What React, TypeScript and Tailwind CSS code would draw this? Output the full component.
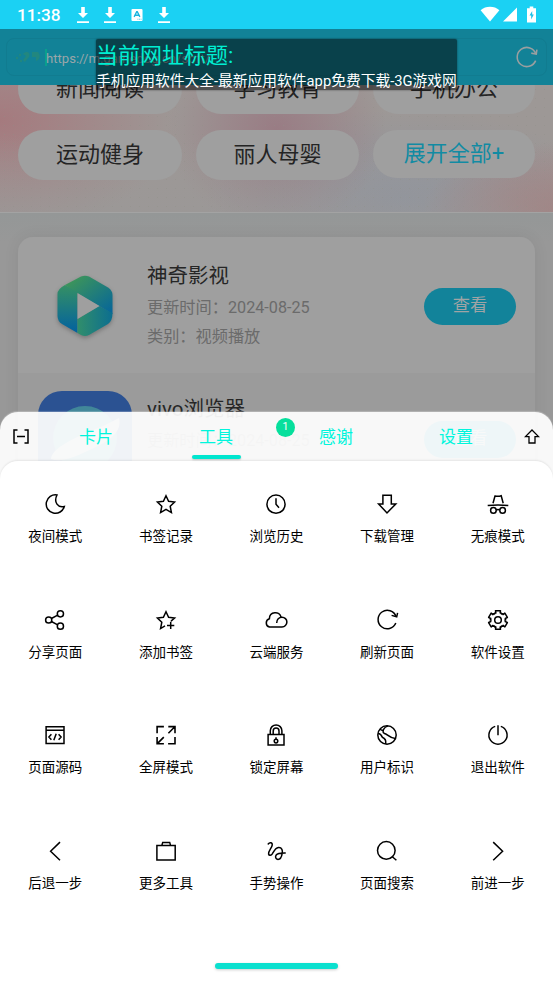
import type { ReactNode } from "react";

function Glyph({ children, size = 24 }: { children: ReactNode; size?: number }) {
  return (
    <svg width={size} height={size} viewBox="0 0 24 24" fill="none" stroke="currentColor" strokeWidth="1.5">
      {children}
    </svg>
  );
}

const gearPoints = Array.from({ length: 6 }, (_, k) => {
  const corners: [number, number][] = [[-30, 6.9], [-22, 7.9], [-17, 7.4], [-15, 9.7], [15, 9.7], [17, 7.4], [22, 7.9]];
  return corners
    .map(([offset, radius]) => {
      const a = ((k * 60 - 90 + offset) * Math.PI) / 180;
      return `${(12 + radius * Math.cos(a)).toFixed(2)},${(12 + radius * Math.sin(a)).toFixed(2)}`;
    })
    .join(" ");
}).join(" ");

const tools: { label: string; icon: ReactNode }[] = [
  { label: "夜间模式", icon: <path d="M14 3A9.2 9.2 0 1 0 21.3 14.5C15.2 16.2 10.3 10.2 14 3Z" /> },
  { label: "书签记录", icon: <path d="M12 3.7 14.6 9.2 20.6 10 16.2 14.2 17.4 20.6 12 17.4 6.6 20.6 7.8 14.2 3.4 10 9.4 9.2Z" /> },
  { label: "浏览历史", icon: <><circle cx="12" cy="12.2" r="9.1" /><path d="M12 6.3V12.3L15 15.7" /></> },
  { label: "下载管理", icon: <path d="M7.9 3.3H16.3V11.9H20.8L12 20.9 3.6 11.9H7.9Z" /> },
  { label: "无痕模式", icon: <><path d="M7 11.2 9 4.1C11 4.1 12 5 15.2 3.7L17.2 11.2M1.7 13.6Q12 12.4 22.3 13.6M10.2 18Q12 17 13.8 18" /><circle cx="7.4" cy="18.4" r="2.8" /><circle cx="16.6" cy="18.4" r="2.8" /></> },
  { label: "分享页面", icon: <><circle cx="5.7" cy="12" r="3.1" /><circle cx="17.4" cy="5.8" r="3.1" /><circle cx="17.4" cy="18.2" r="3.1" /><path d="M8.4 10.5 14.7 7.2M8.4 13.5 14.7 16.8" /></> },
  { label: "添加书签", icon: <path d="M11 17.9 6.6 20.6 7.8 14.2 3.4 10 9.4 9.2 12 3.7 14.6 9.2 20.6 10 17 13.1M16.7 13.8V21M13 17.4H20.3" /> },
  { label: "云端服务", icon: <path d="M17 9.2C16 2.8 5.4 3 5.4 10.7A4.3 4.3 0 0 0 5.5 19H18A4.9 4.9 0 0 0 18 9.2C15 9.2 12.7 11.5 12.7 14.9" /> },
  { label: "刷新页面", icon: <><path d="M20.8 15A9.2 9.2 0 1 1 21 8.6" /><path d="M22.6 4.8 21.7 8.8 16.6 7.4" /></> },
  { label: "软件设置", icon: <><polygon points={gearPoints} strokeLinejoin="round" /><circle cx="12" cy="12" r="3.3" /></> },
  { label: "页面源码", icon: <path d="M3.1 3.7H21V20.5H3.1ZM3.1 7.3H21M8.4 11.2 5.9 14 8.4 16.8M15.6 11.2 18.1 14 15.6 16.8M13.2 10.8 10.8 17.2" /> },
  { label: "全屏模式", icon: <path strokeWidth="1.6" d="M3.1 10.2V3.6H9.9M21 14V20.8H14.1M14.3 3.6H21V10.2M20.8 3.8 14.4 10.2M3.1 14V20.8H9.9M3.3 20.6 9.8 14.1" /> },
  { label: "锁定屏幕", icon: <><path d="M4.1 11.5H20V22.1H4.1ZM6.3 11.5V7.7A5.8 5.8 0 0 1 17.9 7.7V11.5M9.2 11.5V8A2.9 2.9 0 0 1 15 8V11.5M12 14.2V16.5" /><circle cx="12" cy="18.1" r="1.8" /></> },
  { label: "用户标识", icon: <><circle cx="12" cy="12" r="9.2" /><path d="M13 2.9C8.5 4.5 6.5 8.5 9.4 10.5C12.5 10.8 13.2 14.5 20.4 15.5M2.9 10.5C5.6 10.3 6.5 12.4 7.3 14.2C10.7 15.5 11.2 18 10.7 21M5.1 6.2C6.2 7.2 7.1 7.5 8 7.5" /></> },
  { label: "退出软件", icon: <path d="M9.2 3.4A9.1 9.1 0 1 0 14.8 3.4M12 2.3V12.3" /> },
  { label: "后退一步", icon: <path d="M17 3.1 7.6 12.3 17 21.3" /> },
  { label: "更多工具", icon: <path d="M2.9 6.6H21.2V20.9H2.9ZM7.8 6.6 8.7 3.4H15.7L16.6 6.6" /> },
  { label: "手势操作", icon: <path strokeLinecap="round" d="M4.2 5C5.5 3.2 8.7 3.2 8.2 6.2C7.8 9 4.2 12 4.6 15C5 17 7.3 16.5 8.3 14.9C9.6 12.7 11.3 8.8 14.5 8.5C18 8.2 18.8 11.7 18.2 14.3C17.7 17.5 16.5 20.4 14 20.4C11.5 20.2 11 17.6 12.2 16C13.9 13.8 17.5 14 21.2 14" /> },
  { label: "页面搜索", icon: <><circle cx="11.3" cy="11.4" r="8.8" /><path d="M17.3 17.8 21.4 21.3" /></> },
  { label: "前进一步", icon: <path d="M7.2 3.1 16.6 12.3 7.2 21.3" /> },
];

function DownloadMark() {
  return (
    <svg width="14" height="18" viewBox="0 0 14 18" fill="#fff">
      <path d="M5.2 1H8.8V7H12L7 12 2 7H5.2ZM1 15.3H13V17H1Z" />
    </svg>
  );
}

function StatusBar() {
  return (
    <header className="flex h-[29px] shrink-0 items-center bg-[#1bd1f3] pl-[17px] pr-[17px] text-white">
      <span className="w-[59px] pt-[2px] text-[17.2px] font-medium leading-[29px]">11:38</span>
      <div className="flex items-center">
        <DownloadMark />
        <span className="ml-[13px] flex"><DownloadMark /></span>
        <svg className="ml-[14px]" width="12" height="14" viewBox="0 0 13 14">
          <rect x="0.5" y="0.5" width="12" height="13" rx="1.2" fill="#fff" />
          <path d="M3.4 9 6.2 3.4H6.8L9.6 9M4.6 7.2H8.4" stroke="#1bb5df" strokeWidth="1.5" fill="none" />
          <path d="M7 11.6H11.5" stroke="#1bb5df" strokeWidth="0.8" strokeDasharray="1 0.7" />
        </svg>
        <span className="ml-[14px] flex"><DownloadMark /></span>
      </div>
      <div className="ml-auto flex items-center pb-px">
        <svg width="20" height="16" viewBox="0 0 20 16" fill="#fff"><path d="M10 15.5 0.6 4.2C5.8-.4 14.2-.4 19.4 4.2Z" /></svg>
        <svg className="ml-[3px]" width="14" height="15" viewBox="0 0 14 15" fill="#fff"><path d="M14 0.5V14.5H0Z" /></svg>
        <svg className="ml-[10px]" width="9" height="17" viewBox="0 0 9 17">
          <path d="M2.7 0.5H6.3V2.2H9V16.5H0V2.2H2.7Z" fill="#fff" />
          <path d="M5.2 5 2.5 9.6H4.2V13.5L6.8 8.5H5.2Z" fill="#1bc0e8" />
        </svg>
      </div>
    </header>
  );
}

function AddressBar() {
  return (
    <div className="h-[56px] shrink-0 bg-[#128297] px-[6px] pt-[9px]">
      <div className="flex h-[38px] items-center rounded-[8px] border border-[#117c90] pl-[8px] pr-[7px] text-[#9aa6a9]">
        <svg width="26" height="16" viewBox="0 0 26 16" fill="#22877f">
          <circle cx="2" cy="9" r="1.2" /><circle cx="5" cy="6" r="1.2" /><circle cx="6" cy="12" r="1.2" />
          <path d="M8 5C12 1 16 4 14 8L10 13 8 11 11 7ZM17 3H23C26 6 25 11 21 12V8H17Z" />
        </svg>
        <i className="ml-[4px] h-[17px] w-[2px] bg-[#08a08c]" />
        <span className="-ml-px pt-[3px] text-[13.1px] leading-[18px]">https://m.gamedog.cn/soft/</span>
        <span className="ml-auto flex text-[#9a9fa0]">
          <Glyph size={25}>
            <path d="M20.8 15A9.2 9.2 0 1 1 21 8.6" />
            <path d="M22 4.4 21.4 8.8 16.6 7.8" />
          </Glyph>
        </span>
      </div>
    </div>
  );
}

function Chip({ label, accent = false }: { label: string; accent?: boolean }) {
  return (
    <div className={`flex items-center justify-center rounded-full bg-[#9f9f9f] text-[22px] leading-none ${accent ? "h-[48px] text-[#128ba3]" : "h-[50px] pb-px text-[#242424]"}`}>
      {label}
    </div>
  );
}

function Categories() {
  return (
    <section className="h-[128px] shrink-0 overflow-hidden border-b border-[#a3a3a3] bg-[#9d9896] bg-[radial-gradient(circle_at_50%_50%,#8f928866_0.6px,transparent_0.9px),linear-gradient(180deg,transparent_40%,#99989870_100%),radial-gradient(ellipse_180px_110px_at_0%_28%,#a57a7e,transparent),radial-gradient(ellipse_110px_100px_at_50%_35%,#997c84,transparent),radial-gradient(ellipse_130px_70px_at_100%_100%,#a67a7a,transparent),radial-gradient(ellipse_200px_90px_at_73%_90%,#8f949e,transparent)] bg-[length:9px_9px,auto,auto,auto,auto,auto]">
      <div className="-mt-[21px] grid grid-cols-[164px_163px_162px] gap-x-[14px] gap-y-[16px] pl-[18px]">
        <Chip label="新闻阅读" />
        <Chip label="学习教育" />
        <Chip label="手机办公" />
        <Chip label="运动健身" />
        <Chip label="丽人母婴" />
        <Chip label="展开全部+" accent />
      </div>
    </section>
  );
}

function VideoLogo() {
  return (
    <svg className="mt-[2px] drop-shadow-[0_2px_2px_rgba(0,0,0,0.25)]" width="56" height="62" viewBox="0 0 56 62">
      <defs>
        <linearGradient id="top" x1="0" y1="0" x2="1" y2="1"><stop offset="0.1" stopColor="#3e9659" /><stop offset="1" stopColor="#04649c" /></linearGradient>
        <linearGradient id="left" x1="0" y1="0" x2="0" y2="1"><stop offset="0" stopColor="#359064" /><stop offset="1" stopColor="#0261a0" /></linearGradient>
        <linearGradient id="bottom" x1="0" y1="0" x2="1" y2="0"><stop offset="0" stopColor="#318e6b" /><stop offset="1" stopColor="#0c6e90" /></linearGradient>
      </defs>
      <path d="M8 10 24 1.5Q28 0 32 1.5L51 12.5Q55.5 15.5 55.5 20V39L20 18Z" fill="url(#top)" />
      <path d="M8 10Q.5 14 .5 19V41Q.5 46 5 49L20.5 58V17Z" fill="url(#left)" />
      <path d="M20.5 44V58L24 60Q28 62 32 60L51 49Q55.5 46 55.5 38L42 31Z" fill="url(#bottom)" />
      <path d="M20.5 18 42.5 31 20.5 44Z" fill="#9f9f9f" />
    </svg>
  );
}

function BrowserLogo() {
  return (
    <svg width="94" height="94" viewBox="0 0 94 94">
      <rect width="94" height="94" rx="24" fill="#2b5292" />
      <circle cx="47" cy="47" r="32" fill="#418799" />
      <path d="M81 27C84 38 76 48 56 57 39 65 24 72 13 68 14 58 31 50 48 42 63 36 72 32 81 27Z" fill="#9fa8ad" />
    </svg>
  );
}

function AppRow({ name, category, logo, tone }: { name: string; category: string; logo: ReactNode; tone: string }) {
  return (
    <article className={`flex items-center pl-[19px] pr-[19px] ${tone}`}>
      <div className="flex w-[95px] justify-center">{logo}</div>
      <div className="ml-[15px] flex-1">
        <h2 className="pt-[3px] text-[20.5px] leading-[28px] text-[#262626]">{name}</h2>
        <p className="mt-[4px] text-[16.2px] leading-[28px] text-[#6b6b6b]">更新时间：2024-08-25</p>
        <p className="text-[16.2px] leading-[29px] text-[#6b6b6b]">类别：{category}</p>
      </div>
      <button className="mt-[2px] h-[37px] w-[92px] rounded-full bg-[#12839a] text-[17.3px] leading-none text-[#a0a4a5]">查看</button>
    </article>
  );
}

function Sheet() {
  const tabs = ["卡片", "工具", "感谢", "设置"];
  return (
    <div className="absolute inset-x-0 bottom-0 flex h-[572.5px] flex-col rounded-t-[18px] bg-white/93 shadow-[0_-1px_1px_rgba(255,255,255,0.25)]">
      <nav className="flex h-[49px] shrink-0 items-center">
        <div className="flex w-[36px] justify-center pl-[6px] text-black">
          <svg width="16" height="15" viewBox="0 0 16 15" fill="none" stroke="currentColor" strokeWidth="1.5">
            <path d="M4.5 1H1V14H4.5M11.5 1H15V14H11.5M4 7.5H12" />
          </svg>
        </div>
        {tabs.map((tab) => (
          <div key={tab} className="relative flex h-full w-[120px] items-center justify-center pt-[3px] text-[17px] text-[#00f5dc]">
            {tab}
            {tab === "工具" && (
              <>
                <i className="absolute bottom-[2px] h-[4px] w-[49px] rounded-[2px] bg-[#00e6cf] shadow-[0_1px_2px_#0003]" />
                <b className="absolute left-[120px] top-[6px] flex size-[19px] items-center justify-center rounded-full bg-[#06df9c] text-[10.5px] font-normal text-white">1</b>
              </>
            )}
          </div>
        ))}
        <div className="flex w-[31px] justify-center text-black">
          <svg width="16" height="15" viewBox="0 0 16 15" fill="none" stroke="currentColor" strokeWidth="1.3">
            <path d="M8 1 14.5 7.6H11V14H5V7.6H1.5Z" />
          </svg>
        </div>
      </nav>
      <main className="flex flex-1 flex-col items-center rounded-t-[18px] bg-white pt-[0.5px] shadow-[0_-1px_2px_#00000014]">
        <div className="grid w-full grid-cols-5">
          {tools.map(({ label, icon }) => (
            <div key={label} className="flex h-[115.7px] flex-col items-center justify-center gap-[10px] text-black">
              <Glyph>{icon}</Glyph>
              <span className="text-[13.5px] leading-[20px]">{label}</span>
            </div>
          ))}
        </div>
        <div className="mt-[39px] h-[6px] w-[123px] rounded-full bg-[#0be0cf] shadow-[0_1px_3px_#0003]" />
      </main>
    </div>
  );
}

export default function App() {
  return (
    <div className="relative flex h-[984px] w-[553px] flex-col overflow-hidden bg-[#979797] font-['Roboto','Noto_Sans_CJK_SC',sans-serif]">
      <StatusBar />
      <AddressBar />
      <Categories />
      <section className="flex-1 bg-[linear-gradient(180deg,#949797_0px,#989898_30px)] px-[18px] pt-[24px]">
        <div className="overflow-hidden rounded-[15px] shadow-[0_0_16px_#00000012]">
          <AppRow name="神奇影视" category="视频播放" logo={<VideoLogo />} tone="h-[136px] bg-[#9f9f9f]" />
          <AppRow name="vivo浏览器" category="浏览器" logo={<BrowserLogo />} tone="h-[130px] bg-[#9b9b9b]" />
        </div>
      </section>
      <div className="absolute left-[96px] top-[39px] h-[51px] whitespace-nowrap rounded-t-[2px] bg-black/50 shadow-[0_0_2px_#0008]">
        <p className="h-[32px] text-[22px] leading-[34px] text-[#00eed2]">当前网址标题:</p>
        <p className="text-[14.76px] leading-[20px] text-white">手机应用软件大全-最新应用软件app免费下载-3G游戏网</p>
      </div>
      <Sheet />
    </div>
  );
}
